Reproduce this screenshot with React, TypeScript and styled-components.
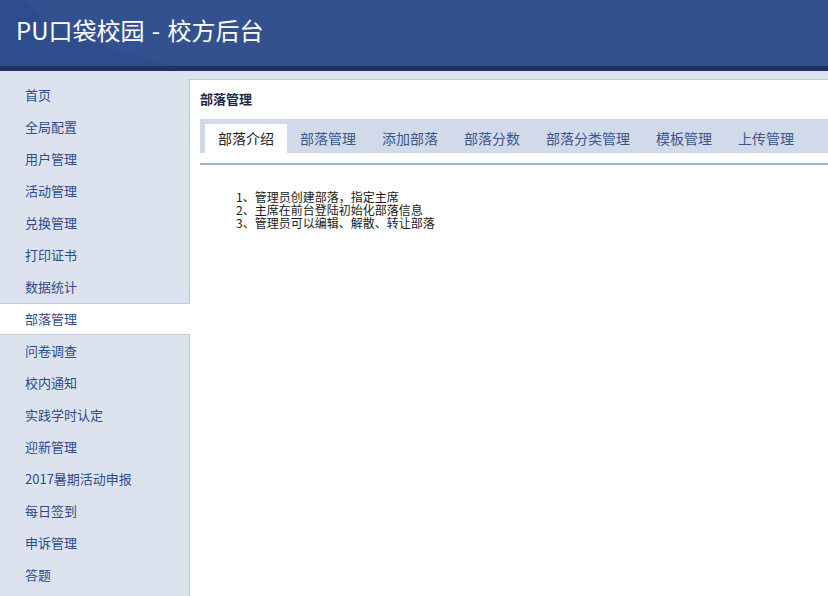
import { createGlobalStyle, styled } from "styled-components"

const GlobalStyle = createGlobalStyle`
  html, body {
    margin: 0;
    padding: 0;
    height: 100%;
    overflow: hidden;
    background: #dde3ee;
    font-family: "Noto Sans CJK SC", "Liberation Sans", sans-serif;
  }
  #root {
    height: 100%;
  }
`

const Page = styled.div`
  display: flex;
  flex-direction: column;
  height: 100%;
`

const Header = styled.header`
  height: 66px;
  border-bottom: 5px solid #1f3360;
  background:
    radial-gradient(ellipse 640px 120px at 660px -12px, rgba(255, 255, 255, 0.025) 0 99%, transparent 100%),
    #2e4d8c;
  display: flex;
  align-items: center;
  padding-left: 16px;
  flex-shrink: 0;
`

const Title = styled.h1`
  margin: 0 0 8px;
  color: #ffffff;
  font-size: 24px;
  font-weight: 400;
  word-spacing: 2px;
`

const Body = styled.div`
  flex: 1;
  display: flex;
  min-height: 0;
`

const Sidebar = styled.nav`
  width: 189px;
  flex-shrink: 0;
  padding-top: 8px;
  display: flex;
  flex-direction: column;
`

const NavItem = styled.a<{ $active?: boolean }>`
  display: block;
  height: 32px;
  line-height: 30px;
  padding-left: 25px;
  font-size: 13px;
  color: #2d4b8c;
  text-decoration: none;
  box-sizing: border-box;
  background: ${(p) => (p.$active ? "#ffffff" : "transparent")};
  border-top: 1px solid ${(p) => (p.$active ? "#c3cad8" : "transparent")};
  border-bottom: 1px solid ${(p) => (p.$active ? "#c3cad8" : "transparent")};
  margin-right: ${(p) => (p.$active ? "-1px" : "0")};
  position: relative;
  z-index: 1;
`

const Main = styled.main`
  flex: 1;
  margin-top: 8px;
  background: #ffffff;
  border-left: 1px solid #c3cad8;
  border-top: 1px solid #c3cad8;
  padding: 0 0 0 10px;
  min-width: 0;
`

const PanelTitle = styled.h2`
  margin: 0;
  padding-top: 10px;
  height: 29px;
  font-size: 13px;
  font-weight: 700;
  color: #1c2a48;
  line-height: 18px;
`

const Tabs = styled.div`
  padding-bottom: 10px;
  border-bottom: 2px solid #9bb4c8;
`

const TabBar = styled.div`
  display: flex;
  background: #d0dae8;
  padding: 5px 0 0 5px;
  height: 29px;
`

const Tab = styled.div<{ $active?: boolean }>`
  padding: 0 13px;
  height: 29px;
  line-height: 29px;
  font-size: 14px;
  white-space: nowrap;
  color: ${(p) => (p.$active ? "#222222" : "#3b5590")};
  background: ${(p) => (p.$active ? "#ffffff" : "transparent")};
`

const Intro = styled.ol`
  list-style: none;
  margin: 0;
  padding: 25px 0 0 36px;
  font-size: 12px;
  line-height: 13px;
  color: #1a1a1a;
`

const navItems = [
  "首页",
  "全局配置",
  "用户管理",
  "活动管理",
  "兑换管理",
  "打印证书",
  "数据统计",
  "部落管理",
  "问卷调查",
  "校内通知",
  "实践学时认定",
  "迎新管理",
  "2017暑期活动申报",
  "每日签到",
  "申诉管理",
  "答题",
]

const tabs = ["部落介绍", "部落管理", "添加部落", "部落分数", "部落分类管理", "模板管理", "上传管理"]

const steps = [
  "1、管理员创建部落，指定主席",
  "2、主席在前台登陆初始化部落信息",
  "3、管理员可以编辑、解散、转让部落",
]

export default function App() {
  return (
    <Page>
      <GlobalStyle />
      <Header>
        <Title>PU口袋校园 - 校方后台</Title>
      </Header>
      <Body>
        <Sidebar>
          {navItems.map((item) => (
            <NavItem key={item} $active={item === "部落管理"}>
              {item}
            </NavItem>
          ))}
        </Sidebar>
        <Main>
          <PanelTitle>部落管理</PanelTitle>
          <Tabs>
            <TabBar>
              {tabs.map((t, i) => (
                <Tab key={t} $active={i === 0}>
                  {t}
                </Tab>
              ))}
            </TabBar>
          </Tabs>
          <Intro>
            {steps.map((s) => (
              <li key={s}>{s}</li>
            ))}
          </Intro>
        </Main>
      </Body>
    </Page>
  )
}
